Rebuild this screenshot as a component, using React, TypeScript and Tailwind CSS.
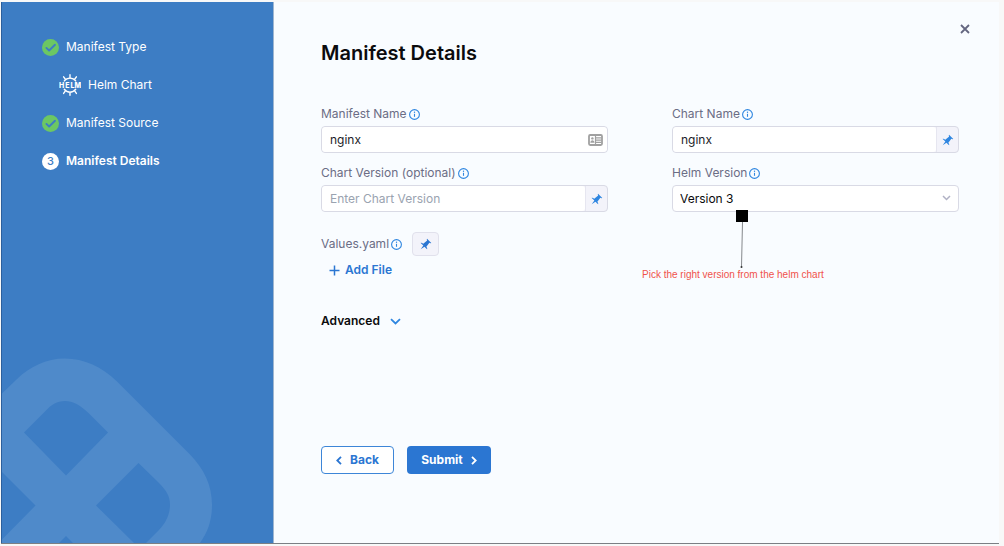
import React, { useState } from 'react';

function InfoIcon() {
  return (
    <svg className="size-[11px] shrink-0 text-[#2f86e0]" viewBox="0 0 11 11" fill="none" aria-hidden="true">
      <circle cx="5.5" cy="5.5" r="4.9" stroke="currentColor" strokeWidth="1.1" />
      <path d="M5.5 4.8v3" stroke="currentColor" strokeWidth="1.1" />
      <circle cx="5.5" cy="3.2" r="0.7" fill="currentColor" />
    </svg>
  );
}

function PinIcon() {
  return (
    <svg className="size-[12px]" viewBox="0 0 16 16" fill="currentColor" aria-hidden="true">
      <path d="M9.41.92c-.51.51-.41 1.5.15 2.56L4.34 7.54C2.8 6.48 1.45 6.05.92 6.58l3.54 3.54-3.54 4.95 4.95-3.54 3.54 3.54c.53-.53.1-1.88-.96-3.42l4.06-5.22c1.06.56 2.04.66 2.55.15L9.41.92z" />
    </svg>
  );
}

function DoneIcon() {
  return (
    <svg className="size-[17px]" viewBox="0 0 17 17" fill="none" aria-hidden="true">
      <circle cx="8.5" cy="8.5" r="8.5" fill="#6cc763" />
      <path d="M4.4 8.9l2.7 2.6 5.900-5.700" stroke="#3d7dc4" strokeWidth="1.900" strokeLinecap="round" strokeLinejoin="round" />
    </svg>
  );
}

function HelmIcon() {
  return (
    <svg className="size-[22px]" viewBox="0 0 22 22" fill="none" stroke="white" strokeWidth="1.4" strokeLinecap="round" aria-hidden="true">
      <path d="M5.300 6.900a7.200 7.200 0 0 1 11.400 0M5.300 15.300a7.200 7.200 0 0 0 11.400 0" />
      <path d="M11 3.800V.8M6.200 5L4.600 2.800M15.800 5l1.600-2.200M11 18.400v2.800M6.200 17.200l-1.600 2.200M15.800 17.200l1.600 2.200" />
      <g className="font-['Inter'] text-[7px] font-extrabold" fill="white" stroke="none" textAnchor="middle">
        <text y="13.600" x="2.600 8.400 13.400 18.800">HELM</text>
      </g>
    </svg>
  );
}

function BrandPattern() {
  return (
    <svg className="absolute bottom-0 -left-px h-[189px] w-[220px]" viewBox="1 354 220 189" aria-hidden="true">
      <path
        fill="#4f8aca"
        fillRule="evenodd"
        d="M1 394.500L16.500 379.500C30 366.500 46 358.500 65 358.500C84 358.500 102 367 117 381.500L190 454.500C204 469 212 485 212 505C212 520 208 532 200 543H1ZM24 432.500L66 475.500L108 432.500L89 413.500C80 405 73 401 65 401C57 401 51 405 45 411.500ZM96 505.500L134 543H146L158.500 530.500C166 523 170 514 170 504.500C170 496 166 490 158.500 482.500L138.500 463ZM1 471L35.500 505.500L1 540.500ZM59 543L66 536L73 543Z"
      />
    </svg>
  );
}

function Label({ id, children }: { id: string; children: React.ReactNode }) {
  return (
    <div className="flex h-5 items-center gap-0.5">
      <label htmlFor={id} className="text-xs text-[#6b6d85]">{children}</label>
      <InfoIcon />
    </div>
  );
}

type FieldProps = {
  id: string;
  label: string;
  value?: string;
  placeholder?: string;
  pinned?: boolean;
};

function TextField({ id, label, value = '', placeholder, pinned }: FieldProps) {
  const [text, setText] = useState(value);
  return (
    <div className="flex flex-col gap-0.5">
      <Label id={id}>{label}</Label>
      <div className="flex h-[27px] items-stretch overflow-hidden rounded border border-[#d9dae5] bg-[#f3f3fa]">
        <div className="flex min-w-0 grow items-center rounded-[3px] bg-white">
          <input
            id={id}
            value={text}
            placeholder={placeholder}
            onChange={(e) => setText(e.target.value)}
            className="min-w-0 grow bg-transparent px-2 text-xs text-[#1c1c28] outline-none placeholder:text-[#9aa3b0]"
          />
          {!pinned && (
            <svg className="mr-1 h-[12px] w-[15px] shrink-0" viewBox="0 0 15 12" fill="none" stroke="#a0a0a0" aria-hidden="true">
              <rect x="1" y="1" width="13" height="10" rx="1.200" strokeWidth="1.800" />
              <path d="M7.500 1v10M8 3.800h5.500M8 6.100h5.500M8 8.400h5.500" strokeWidth="1.200" />
              <circle cx="4.400" cy="4.400" r="1.200" fill="#a0a0a0" stroke="none" />
              <path d="M2.300 8.800c0-3.400 4.200-3.400 4.200 0z" fill="#a0a0a0" stroke="none" />
            </svg>
          )}
        </div>
        {pinned && (
          <button type="button" aria-label={`${label} input type`} className="flex w-[22px] shrink-0 items-center justify-center border-l border-[#e6e6f0] text-[#2f86e0]">
            <PinIcon />
          </button>
        )}
      </div>
    </div>
  );
}

export default function App() {
  return (
    <div className="flex min-h-screen bg-[#f8f8f8] pt-0.5 pr-[5px] pb-0.5 pl-px font-['Inter',sans-serif]">
      <div className="flex grow border-b border-[#7b7f84] bg-[#f9fcff]">
        <aside className="relative w-[273px] shrink-0 overflow-hidden border-r border-l border-r-[#9fb6d0] border-l-[#2c5f9c] bg-[#3d7dc4] pt-[35px] pl-10 text-xs text-white">
          <BrandPattern />
          <ol className="relative flex flex-col gap-[18px]">
            <li className="flex h-5 items-center gap-[7px]"><DoneIcon />Manifest Type</li>
            <li className="flex h-5 items-center gap-[7px] pl-[17px]"><HelmIcon />Helm Chart</li>
            <li className="flex h-5 items-center gap-[7px]"><DoneIcon />Manifest Source</li>
            <li className="flex h-5 items-center gap-[7px] font-semibold" aria-current="step">
              <span className="flex size-[17px] items-center justify-center rounded-full bg-white text-[11px] font-medium text-[#3d7dc4]">3</span>
              Manifest Details
            </li>
          </ol>
        </aside>

        <main className="relative min-w-0 grow pt-9 pr-10 pb-16 pl-[47px]">
          <button type="button" aria-label="Close" className="absolute top-[17px] right-6 flex size-5 items-center justify-center text-[#646680]">
            <svg className="size-[10px]" viewBox="0 0 10 10" stroke="currentColor" strokeWidth="1.800" aria-hidden="true">
              <path d="M1 1l8 8M9 1L1 9" />
            </svg>
          </button>

          <h1 className="text-xl leading-[30px] font-semibold text-[#0b0b0d]">Manifest Details</h1>

          <form onSubmit={(e) => e.preventDefault()}>
            <div className="mt-9 grid grid-cols-2 gap-x-16 gap-y-[10px]">
              <TextField id="manifest-name" label="Manifest Name" value="nginx" />
              <TextField id="chart-name" label="Chart Name" value="nginx" pinned />
              <TextField id="chart-version" label="Chart Version (optional)" placeholder="Enter Chart Version" pinned />
              <div className="relative flex flex-col gap-0.5">
                <Label id="helm-version">Helm Version</Label>
                <div className="relative">
                  <select id="helm-version" defaultValue="3" className="block h-[27px] w-full appearance-none rounded border border-[#d9dae5] bg-white px-[7px] text-xs text-[#0b0b0d] outline-none">
                    <option value="2">Version 2</option>
                    <option value="3">Version 3</option>
                  </select>
                  <svg className="pointer-events-none absolute top-[10px] right-2 h-[6px] w-[9px]" viewBox="0 0 9 6" fill="none" stroke="#b0b1c4" strokeWidth="1.500" aria-hidden="true">
                    <path d="M1 1l3.500 3.500L8 1" />
                  </svg>
                </div>
                <div className="absolute top-[47px] -left-[30px] flex flex-col">
                  <svg className="ml-[93px] h-[58px] w-[14px]" viewBox="0 0 14 58" aria-hidden="true">
                    <path d="M7.500 12L6.500 57" stroke="#85888c" strokeWidth="1" />
                    <rect x="1" y="0" width="12" height="12" fill="black" />
                    <circle cx="6.500" cy="57" r="1" fill="#333" />
                  </svg>
                  <p className="font-['Liberation_Sans',sans-serif] text-[10px] leading-[13px] whitespace-nowrap text-[#f0524b]">Pick the right version from the helm chart</p>
                </div>
              </div>
            </div>

            <div className="mt-5 flex h-6 items-center">
              <Label id="values-pin">Values.yaml</Label>
              <button id="values-pin" type="button" className="ml-[10px] flex h-6 w-[27px] items-center justify-center rounded border border-[#e1e1ec] bg-[#f3f3fa] text-[#2b76d2]">
                <PinIcon />
              </button>
            </div>
            <button type="button" className="mt-1 ml-2 flex h-5 items-center gap-[5px] text-xs font-semibold text-[#2b76d2]">
              <svg className="size-[11px]" viewBox="0 0 11 11" stroke="currentColor" strokeWidth="1.500" aria-hidden="true">
                <path d="M5.500 0.500v10M0.500 5.500h10" />
              </svg>
              Add File
            </button>
            <button type="button" aria-expanded="false" className="mt-[31px] flex h-5 items-center gap-[10px] text-xs font-semibold text-[#0b0b0d]">
              Advanced
              <svg className="h-[7px] w-[11px]" viewBox="0 0 11 7" fill="none" stroke="#2f86e0" strokeWidth="1.800" aria-hidden="true">
                <path d="M1 1.200l4.500 4.200L10 1.200" />
              </svg>
            </button>

            <div className="mt-[115px] flex gap-[13px]">
              <button type="button" className="flex h-7 w-[73px] items-center justify-center gap-2 rounded border border-[#3d86d8] bg-white text-xs font-bold text-[#2b76d2]">
                <svg className="h-[9px] w-[6px]" viewBox="0 0 6 9" fill="none" stroke="currentColor" strokeWidth="1.800" aria-hidden="true">
                  <path d="M5 0.800L1.300 4.500L5 8.200" />
                </svg>
                Back
              </button>
              <button type="submit" className="flex h-7 w-[84px] items-center justify-center gap-2 rounded bg-[#2b76d2] text-xs font-bold text-white">
                Submit
                <svg className="h-[9px] w-[6px]" viewBox="0 0 6 9" fill="none" stroke="currentColor" strokeWidth="1.800" aria-hidden="true">
                  <path d="M1 0.800L4.700 4.500L1 8.200" />
                </svg>
              </button>
            </div>
          </form>
        </main>
      </div>
    </div>
  );
}
